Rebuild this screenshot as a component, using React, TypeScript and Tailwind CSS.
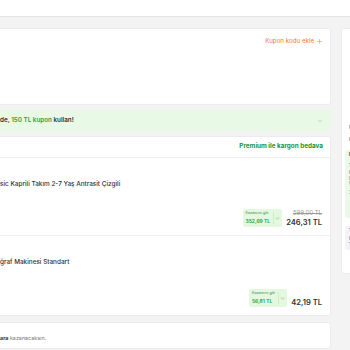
import { ChevronDown, Plus } from "lucide-react";

// prefix that hangs off the left edge of the viewport
const Cut = ({ text }: { text: string }) => (
  <span className="inline-flex w-0 justify-end whitespace-nowrap">{text}</span>
);

const PriceBox = ({ amount }: { amount: string }) => (
  <div className="flex items-center rounded-[2px] bg-[#e3f8df] pl-[3px] pr-[2px] h-[18px]">
    <div className="flex flex-col leading-none">
      <span className="text-[3.6px] text-[#4a8a4f]">Kazancını gör</span>
      <span className="mt-[3px] text-[5px] font-semibold text-[#2b9a3c]">{amount}</span>
    </div>
    <div className="ml-[3px] h-[12px] border-l border-[#c9efc3]" />
    <ChevronDown className="ml-[1px] w-[5px] h-[5px] text-[#6a9a6d]" strokeWidth={2.5} />
  </div>
);

const Product = ({
  prefix,
  title,
  amount,
  oldPrice,
  price,
  height,
}: {
  prefix: string;
  title: string;
  amount: string;
  oldPrice?: string;
  price: string;
  height: string;
}) => (
  <div className={`flex flex-col justify-between pt-[22px] pb-[8px] pr-[8px] border-b border-[#efefef] last:border-b-0 ${height}`}>
    <p className="text-[6.4px] leading-[8px] font-medium text-[#333] whitespace-nowrap">
      <Cut text={prefix} />
      {title}
    </p>
    <div className="flex items-end justify-end gap-[4px]">
      <PriceBox amount={amount} />
      <div className="flex flex-col items-end leading-none">
        {oldPrice && (
          <span className="text-[6px] text-[#9a9a9a] line-through mb-[3px]">{oldPrice}</span>
        )}
        <span className="text-[7.6px] font-semibold text-[#333]">{price}</span>
      </div>
    </div>
  </div>
);

export default function App() {
  return (
    <div className="w-[350px] h-[350px] overflow-hidden bg-[#f3f3f3] font-['Inter',sans-serif]">
      {/* Header */}
      <div className="h-[17px] bg-white border-b border-[#e6e6e6]" />

      <div className="flex gap-[10px] pt-[11px]">
        {/* Main column */}
        <div className="w-[331px] shrink-0 flex flex-col">
          {/* Coupon */}
          <div className="h-[77px] bg-white rounded-r-[3px] border border-l-0 border-[#ececec] flex justify-end pt-[8px] pr-[7px]">
            <span className="flex items-center gap-[2px] h-[8px] text-[6.2px] text-[#f27a1a]">
              Kupon kodu ekle
              <Plus className="w-[7px] h-[7px]" strokeWidth={1.6} />
            </span>
          </div>

          {/* Banner */}
          <div className="mt-[5px] h-[21px] bg-[#e8f9e5] rounded-r-[3px] flex items-center justify-between pr-[8px]">
            <span className="text-[6.3px] font-semibold text-[#333] whitespace-nowrap">
              <Cut text="Sepetinde" />
              de, <span className="text-[#2ea043]">150 TL kupon</span> kullan!
            </span>
            <ChevronDown className="w-[6px] h-[6px] text-[#8bbf8d]" strokeWidth={2} />
          </div>

          {/* Products */}
          <div className="mt-[5px] bg-white rounded-r-[3px] border border-l-0 border-[#ececec]">
            <div className="h-[21px] flex items-center justify-end pr-[7px] border-b border-[#efefef]">
              <span className="text-[6.35px] font-bold text-[#1f8f3a]">Premium ile kargon bedava</span>
            </div>
            <Product
              prefix="Erkek Çocuk Ba"
              title="sic Kaprili Takım 2-7 Yaş Antrasit Çizgili"
              amount="352,69 TL"
              oldPrice="599,00 TL"
              price="246,31 TL"
              height="h-[78px]"
            />
            <Product
              prefix="Oyuncak Foto"
              title="ğraf Makinesi Standart"
              amount="56,81 TL"
              price="42,19 TL"
              height="h-[79px]"
            />
          </div>

          {/* Footer note */}
          <div className="mt-[6px] h-[27px] bg-white rounded-r-[3px] border border-l-0 border-[#ececec] flex items-center pt-[6px]">
            <span className="text-[5.4px] text-[#777] whitespace-nowrap">
              <Cut text="Bu siparişten 12,50 TL Trendyol P" />
              <span className="font-bold text-[#333]">ara</span> kazanacaksın.
            </span>
          </div>
        </div>

        {/* Summary sidebar */}
        <div className="w-[140px] shrink-0 h-[246px] bg-white rounded-[3px] border border-[#ececec] flex flex-col pl-[3px] pt-[96px] text-[4.6px] leading-[5px] whitespace-nowrap">
          <span className="pl-[4px] text-[#555]">Ürün Toplamı</span>
          <span className="pl-[4px] mt-[7px] text-[#555]">Kargo Toplam</span>
          <div className="mt-[8px] h-[68px] bg-[#ecf9ea] rounded-[2px] flex flex-col pl-[4px] pt-[2px] text-[#777]">
            <span className="font-bold text-[#333]">Premium Avantajı</span>
            <span className="mt-[6px]">1 ay ücretsiz dene</span>
            <span className="mt-[2px]">Kargo bedava</span>
            <span className="mt-[1px]">Hızlı teslimat</span>
            <span>Özel indirimler</span>
            <span className="mt-[4px] text-[#2ea043]">39,99 TL</span>
          </div>
          <div className="mt-[8px] h-[24px] bg-[#f3f1fb] rounded-[2px] flex flex-col pl-[4px] pt-[2px] text-[#777]">
            <span className="font-bold text-[#333]">Trendyol Para</span>
            <span className="mt-[3px]">Kazanacağın tutar</span>
            <span className="mt-[1px]">12,50 TL</span>
          </div>
        </div>
      </div>
    </div>
  );
}
